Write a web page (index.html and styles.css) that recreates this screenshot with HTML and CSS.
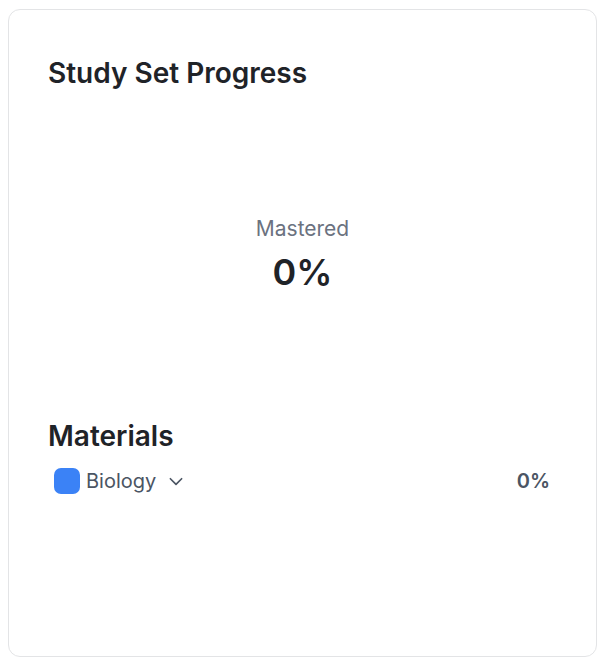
FILE: index.html
```html
<!DOCTYPE html>
<html>
<head>
<meta charset="utf-8">
<link rel="stylesheet" href="styles.css">
</head>
<body>
<div class="card">
  <h2 class="title">Study Set Progress</h2>
  <div class="mastered">
    <div class="mastered-label">Mastered</div>
    <div class="mastered-value">0%</div>
  </div>
  <h3 class="materials-title">Materials</h3>
  <div class="material-row">
    <div class="material-name">
      <span class="swatch"></span>
      <span class="name">Biology</span>
      <svg class="chevron" width="18" height="18" viewBox="0 0 16 16" fill="none" stroke="#4b5563" stroke-width="1.5" stroke-linecap="round" stroke-linejoin="round"><path d="M3 6l5 5 5-5"/></svg>
    </div>
    <div class="material-pct">0%</div>
  </div>
</div>
</body>
</html>
```
FILE: styles.css
```css
* { box-sizing: border-box; }
html, body { margin: 0; background: #ffffff; }
body {
  padding: 9px 7px 0 8px;
  font-family: Inter, "Noto Sans", sans-serif;
  color: #1f2328;
}
.card {
  height: 648px;
  border: 1px solid #e3e4e6;
  border-radius: 12px;
  padding: 45px 39px 0 39px;
  display: flex;
  flex-direction: column;
}
.title {
  margin: 0;
  font-size: 28px;
  line-height: 36px;
  font-weight: 600;
  color: #1f2328;
}
.mastered {
  height: 327px;
  display: flex;
  flex-direction: column;
  align-items: center;
  justify-content: center;
}
.mastered-label {
  font-size: 21px;
  line-height: 28px;
  color: #6b7280;
}
.mastered-value {
  margin-top: 7px;
  font-size: 36px;
  line-height: 44px;
  font-weight: 600;
  color: #1f2328;
}
.materials-title {
  margin: 0;
  font-size: 28px;
  line-height: 36px;
  font-weight: 600;
  color: #1f2328;
}
.material-row {
  margin-top: 13px;
  display: flex;
  align-items: center;
  justify-content: space-between;
  padding: 0 7px 0 6px;
}
.material-name {
  display: flex;
  align-items: center;
  gap: 6px;
}
.swatch {
  width: 26px;
  height: 26px;
  border-radius: 7px;
  background: #3b82f6;
}
.name {
  font-size: 20px;
  line-height: 28px;
  color: #4b5563;
}
.chevron { margin-left: 5px; }
.material-pct {
  font-size: 20px;
  line-height: 28px;
  font-weight: 600;
  color: #4b5563;
}
```
